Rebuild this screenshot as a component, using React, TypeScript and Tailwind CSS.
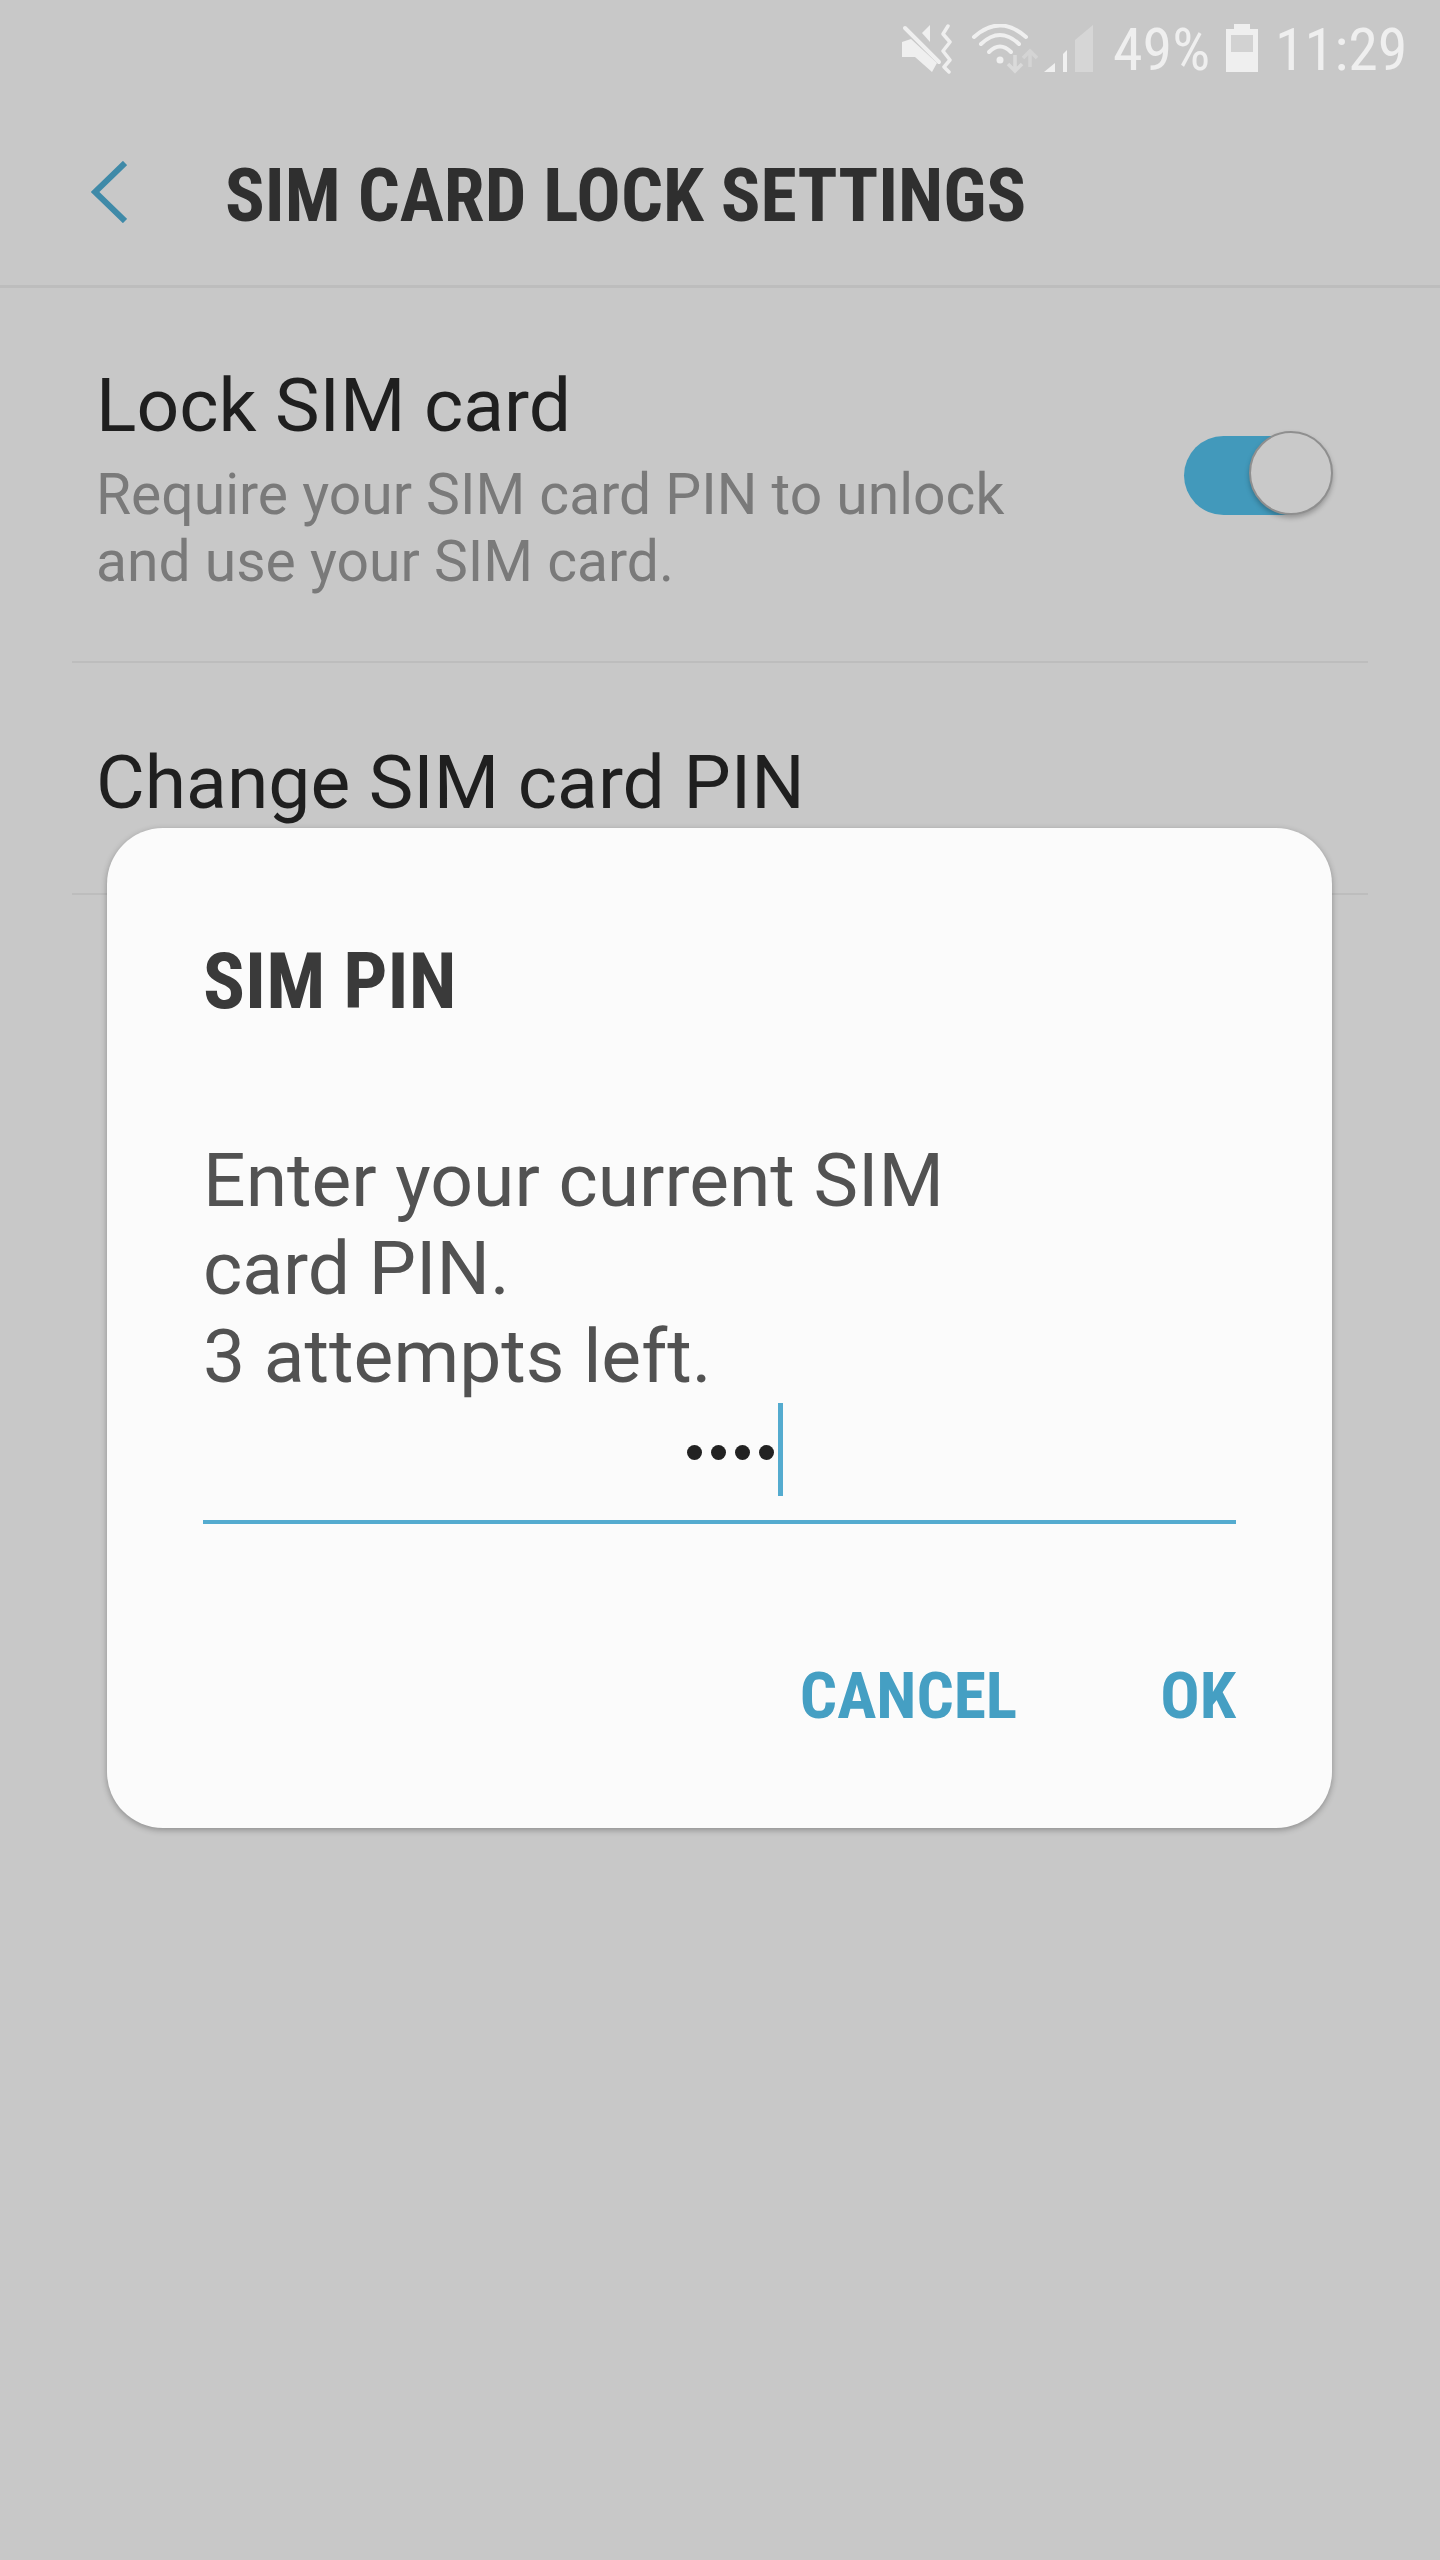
const condensed = { fontFamily: '"Roboto Condensed", Roboto, sans-serif' };

// volume-off, wifi and signal cluster of the status bar
const StatusIcons = () => (
  <svg width="192" height="50" viewBox="0 0 192 50" fill="none">
    <path d="M0 18L9 15L35 39L30 48L13 33L0 33Z" fill="#efefef" />
    <path d="M28 1V18L20 9Z" fill="#efefef" />
    <path d="M3 4L37 38" stroke="#efefef" strokeWidth="4" strokeLinecap="round" />
    <path d="M46 2L41 10L48 18L41 27L48 36L42 43L47 48" stroke="#efefef" strokeWidth="3.5" strokeLinecap="round" strokeLinejoin="round" />
    <path d="M72 13Q98 -10 124 13" stroke="#efefef" strokeWidth="4" strokeLinecap="round" />
    <path d="M79 20Q98 2 117 20" stroke="#efefef" strokeWidth="4" strokeLinecap="round" />
    <path d="M87 28Q98 17 109 28" stroke="#efefef" strokeWidth="4" strokeLinecap="round" />
    <circle cx="98" cy="36" r="3.5" fill="#efefef" />
    <path d="M113 31V47M106 40L113 47L120 40" stroke="#dadada" strokeWidth="3.5" />
    <path d="M128 43V27M121 34L128 27L135 34" stroke="#d4d4d4" strokeWidth="3.5" />
    <path d="M142 48H153V39Z" fill="#f0f0f0" />
    <path d="M161 48H165V26L161 30Z" fill="#f0f0f0" />
    <path d="M173 16L191 1V48H173Z" fill="#d6d6d6" />
  </svg>
);

const BatteryIcon = () => (
  <svg width="32" height="48" viewBox="0 0 32 48">
    <path d="M8 0H24V5H32V48H0V5H8Z" fill="#efefef" />
    <rect x="5" y="11" width="22" height="17" fill="#d2d2d2" />
  </svg>
);

const StatusBar = () => (
  <div className="flex h-[96px] items-start justify-end pr-[36px] pt-[24px] text-[60px] leading-[48px] text-[#efefef]" style={condensed}>
    <StatusIcons />
    <span className="ml-[19px] w-[95px] whitespace-nowrap pt-[2px]">49%</span>
    <span className="ml-[18px]">
      <BatteryIcon />
    </span>
    <span className="ml-[17px] w-[129px] whitespace-nowrap pt-[2px]">11:29</span>
  </div>
);

const Toggle = () => (
  <div className="relative mb-[-1px] mr-[44px] h-[79px] w-[140px] rounded-full bg-[#4299bb]">
    <div className="absolute right-[-9px] top-[-5px] h-[84px] w-[84px] rounded-full border-2 border-[#8f8f8f] bg-[#c9c9c9] shadow-[0_3px_5px_rgba(0,0,0,0.25)]" />
  </div>
);

const PinDialog = () => (
  <div className="absolute left-[107px] top-[828px] flex h-[1000px] w-[1225px] flex-col rounded-[56px] bg-[#fbfbfb] pl-[96px] pr-[96px] shadow-[0_2px_6px_rgba(0,0,0,0.3)]">
    <h2 className="mt-[112px] whitespace-nowrap text-[78px] font-bold leading-[84px] text-[#3a3a3a]" style={condensed}>
      SIM PIN
    </h2>
    <p className="mt-[112px] text-[75px] leading-[88px] text-[#525252]">
      Enter your current SIM
      <br />
      card PIN.
      <br />3 attempts left.
    </p>
    <div className="relative h-[124px] border-b-4 border-[#54abcf]">
      <div className="absolute left-[484px] top-[45px] flex gap-[9px]">
        {[0, 1, 2, 3].map((dot) => (
          <span key={dot} className="h-[15px] w-[15px] rounded-full bg-[#222222]" />
        ))}
      </div>
      <span className="absolute left-[575px] top-[3px] h-[93px] w-[5px] bg-[#54abcf]" />
    </div>
    <div className="mt-[132px] flex justify-end gap-[143px] text-[65.5px] font-bold leading-[80px] text-[#459fc3]" style={condensed}>
      <button>CANCEL</button>
      <button>OK</button>
    </div>
  </div>
);

export default function App() {
  return (
    <div className="relative h-[2560px] w-[1440px] overflow-hidden bg-[#c8c8c8] font-['Roboto',sans-serif]">
      <StatusBar />
      <header className="flex h-[192px] items-start border-b-[3px] border-[#bdbdbd] pl-[91px] pt-[65px]">
        <svg width="36" height="62" viewBox="0 0 36 62" fill="none">
          <path d="M34 2L4 31L34 60" stroke="#3f8aa8" strokeWidth="6" />
        </svg>
        <h1 className="ml-[98px] mt-[-5px] whitespace-nowrap text-[73.8px] font-bold leading-[80px] text-[#2f2f2f]" style={condensed}>
          SIM CARD LOCK SETTINGS
        </h1>
      </header>
      <section className="mx-[72px] flex h-[375px] items-center justify-between border-b-2 border-[#bdbdbd] pl-[24px]">
        <div className="pt-[8px]">
          <div className="text-[75px] leading-[84px] text-[#1f1f1f]">Lock SIM card</div>
          <div className="mt-[14px] text-[57px] leading-[67px] text-[#7a7a7a]">
            Require your SIM card PIN to unlock
            <br />
            and use your SIM card.
          </div>
        </div>
        <Toggle />
      </section>
      <section className="mx-[72px] h-[232px] border-b-2 border-[#bdbdbd] pl-[24px] pt-[77px]">
        <div className="text-[75px] leading-[84px] text-[#1f1f1f]">Change SIM card PIN</div>
      </section>
      <PinDialog />
    </div>
  );
}
